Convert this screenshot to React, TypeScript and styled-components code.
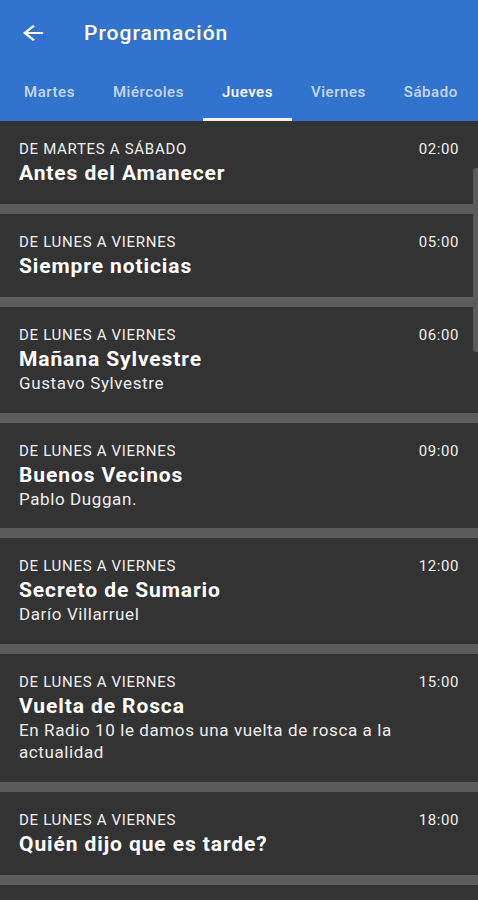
import React from "react";
import styled, { createGlobalStyle } from "styled-components";

const GlobalStyle = createGlobalStyle`
  html, body {
    margin: 0;
    padding: 0;
    background: #333333;
    font-family: Roboto, "Noto Sans", sans-serif;
  }
`;

type Programa = {
  dias: string;
  hora: string;
  titulo: string;
  conductor?: string;
};

const programas: Programa[] = [
  { dias: "De martes a sábado", hora: "02:00", titulo: "Antes del Amanecer" },
  { dias: "De lunes a viernes", hora: "05:00", titulo: "Siempre noticias" },
  { dias: "De lunes a viernes", hora: "06:00", titulo: "Mañana Sylvestre", conductor: "Gustavo Sylvestre" },
  { dias: "De lunes a viernes", hora: "09:00", titulo: "Buenos Vecinos", conductor: "Pablo Duggan." },
  { dias: "De lunes a viernes", hora: "12:00", titulo: "Secreto de Sumario", conductor: "Darío Villarruel" },
  {
    dias: "De lunes a viernes",
    hora: "15:00",
    titulo: "Vuelta de Rosca",
    conductor: "En Radio 10 le damos una vuelta de rosca a la actualidad",
  },
  { dias: "De lunes a viernes", hora: "18:00", titulo: "Quién dijo que es tarde?" },
];

const dias = ["Martes", "Miércoles", "Jueves", "Viernes", "Sábado"];

const Screen = styled.div`
  width: 478px;
  height: 900px;
  overflow: hidden;
  position: relative;
  background: #5c5c5c;
`;

const Header = styled.header`
  background: #3273d0;
  color: #fff;
`;

const Toolbar = styled.div`
  height: 66px;
  display: flex;
  align-items: center;
  padding-left: 18px;
`;

const BackButton = styled.div`
  width: 30px;
  height: 24px;
  display: flex;
  margin-right: 36px;
`;

const Title = styled.h1`
  margin: 0;
  font-size: 21px;
  font-weight: 500;
  letter-spacing: 1px;
`;

const Tabs = styled.nav`
  display: flex;
  height: 55px;
  padding-left: 5px;
  white-space: nowrap;
`;

const Tab = styled.div<{ $active?: boolean }>`
  position: relative;
  display: flex;
  align-items: center;
  justify-content: center;
  padding: 0 19px 4px;
  font-size: 15px;
  font-weight: 500;
  letter-spacing: 0.55px;
  color: ${(p) => (p.$active ? "#ffffff" : "rgba(255,255,255,0.74)")};

  &::after {
    content: "";
    display: ${(p) => (p.$active ? "block" : "none")};
    position: absolute;
    left: 0;
    right: 0;
    bottom: 0;
    height: 3px;
    background: #f2f2f2;
  }
`;

const List = styled.div`
  display: flex;
  flex-direction: column;
  gap: 10px;
`;

const Card = styled.article`
  background: #333333;
  padding: 19px 19px 18px;
  display: flex;
  align-items: flex-start;
  color: #fff;
`;

const Info = styled.div`
  flex: 1;
  display: flex;
  flex-direction: column;
`;

const Dias = styled.div`
  font-size: 15px;
  line-height: 18px;
  letter-spacing: 0.7px;
  text-transform: uppercase;
  color: #f0f0f0;
`;

const Nombre = styled.div`
  font-size: 21px;
  font-weight: 700;
  line-height: 26px;
  letter-spacing: 0.9px;
  margin-top: 2px;
`;

const Conductor = styled.div`
  font-size: 17px;
  line-height: 22.5px;
  letter-spacing: 0.6px;
  color: #eeeeee;
`;

const Hora = styled.div`
  font-size: 15px;
  line-height: 18px;
  letter-spacing: 0.6px;
  color: #f0f0f0;
`;

const ScrollThumb = styled.div`
  position: absolute;
  right: 0;
  top: 168px;
  width: 5px;
  height: 184px;
  border-radius: 3px 0 0 3px;
  background: #5a5a5a;
`;

export default function App() {
  return (
    <>
      <GlobalStyle />
      <Screen>
        <Header>
          <Toolbar>
            <BackButton>
              <svg width="30" height="24" viewBox="0 0 24 24" preserveAspectRatio="none" fill="#fff">
                <path d="M20 11H7.83l5.59-5.59L12 4l-8 8 8 8 1.41-1.41L7.83 13H20v-2z" />
              </svg>
            </BackButton>
            <Title>Programación</Title>
          </Toolbar>
          <Tabs>
            {dias.map((d) => (
              <Tab key={d} $active={d === "Jueves"}>
                {d}
              </Tab>
            ))}
          </Tabs>
        </Header>
        <List>
          {programas.map((p) => (
            <Card key={p.hora}>
              <Info>
                <Dias>{p.dias}</Dias>
                <Nombre>{p.titulo}</Nombre>
                {p.conductor && <Conductor>{p.conductor}</Conductor>}
              </Info>
              <Hora>{p.hora}</Hora>
            </Card>
          ))}
          <Card />
        </List>
        <ScrollThumb />
      </Screen>
    </>
  );
}
